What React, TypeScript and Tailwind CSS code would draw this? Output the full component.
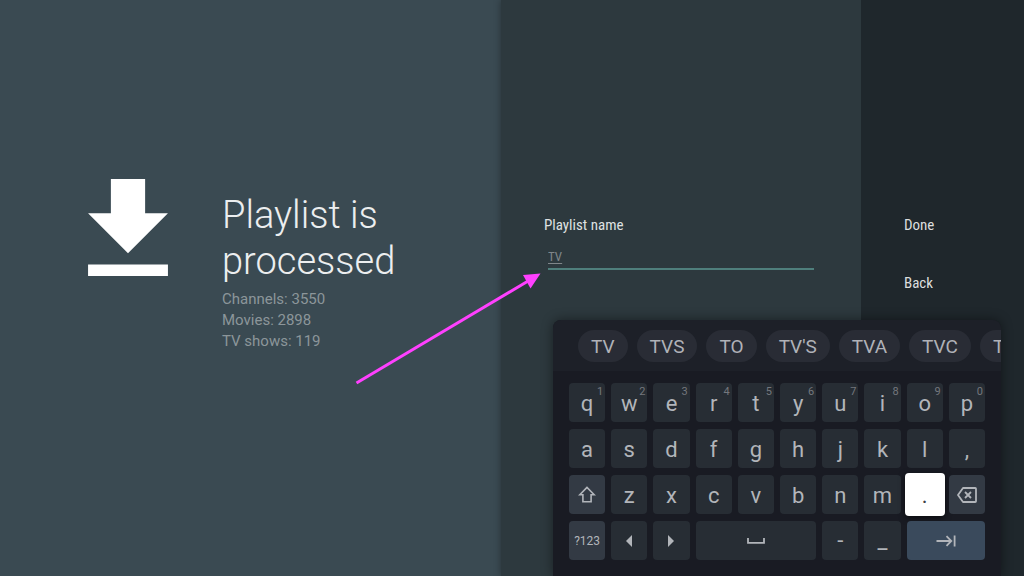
import type { ReactNode } from "react";

const suggestions = ["TV", "TVS", "TO", "TV'S", "TVA", "TVC", "T"];
const topRow = ["q", "w", "e", "r", "t", "y", "u", "i", "o", "p"];
const homeRow = ["a", "s", "d", "f", "g", "h", "j", "k", "l", ","];
const bottomRow = ["z", "x", "c", "v", "b", "n", "m"];
const stats = ["Channels: 3550", "Movies: 2898", "TV shows: 119"];

const plain = "bg-[#272d34]";
const special = "bg-[#333a44]";

function Key({ children, label, tone = plain, hint }: { children: ReactNode; label?: string; tone?: string; hint?: string }) {
  return (
    <button
      type="button"
      aria-label={label}
      className={`relative flex h-[39px] items-center justify-center rounded text-[22px] leading-none text-[#b2b5ba] ${tone}`}
    >
      {children}
      {hint && <span className="absolute top-[3px] right-[2px] text-[11px] leading-none text-[#74777d]">{hint}</span>}
    </button>
  );
}

function LetterKey({ letter, hint }: { letter: string; hint?: string }) {
  return (
    <Key hint={hint}>
      <span className="pt-[2px]">{letter}</span>
    </Key>
  );
}

function Keyboard() {
  return (
    <section
      aria-label="Keyboard"
      className="absolute right-[23px] bottom-0 w-[448px] overflow-hidden rounded-t-lg bg-[#191b23] shadow-[0_0_12px_rgba(0,0,0,0.45)]"
    >
      <div className="flex gap-[9px] overflow-hidden bg-[#1d2028] pt-[10px] pb-[9px] pl-[25px]">
        {suggestions.map((word) => (
          <button
            key={word}
            type="button"
            className="h-8 shrink-0 rounded-full bg-[#292c35] px-[13px] text-[19px] leading-none text-[#b0b2b8]"
          >
            {word}
          </button>
        ))}
      </div>
      <div className="grid grid-cols-10 gap-x-[6px] gap-y-[7px] px-4 pt-3 pb-4">
        {topRow.map((k, i) => (
          <LetterKey key={k} letter={k} hint={String((i + 1) % 10)} />
        ))}
        {homeRow.map((k) => (
          <LetterKey key={k} letter={k} />
        ))}
        <Key label="Shift" tone={special}>
          <svg className="h-[18px] w-[18px]" viewBox="0 0 18 18" fill="none" stroke="currentColor" strokeWidth="1.6">
            <path d="M9 1.4 1.8 8.8h3.1v7h8.2v-7h3.1z" />
          </svg>
        </Key>
        {bottomRow.map((k) => (
          <LetterKey key={k} letter={k} />
        ))}
        <button
          type="button"
          className="relative -m-[2px] flex items-center justify-center rounded bg-white pt-[2px] text-[22px] leading-none text-[#3c4045] shadow-[0_2px_6px_rgba(0,0,0,0.6)]"
        >
          .
        </button>
        <Key label="Backspace" tone={special}>
          <svg className="h-4 w-5" viewBox="0 0 20 16" fill="none" stroke="currentColor" strokeWidth="1.8">
            <path d="M6 1h12.2a.8.8 0 0 1 .8.8v12.4a.8.8 0 0 1-.8.8H6L1 8z" strokeLinejoin="round" />
            <path d="m8 5 6 6m0-6-6 6" />
          </svg>
        </Key>
        <Key tone={special}>
          <span className="text-[12px]">?123</span>
        </Key>
        <Key label="Left">
          <svg className="h-3 w-2" viewBox="0 0 8 12" fill="currentColor">
            <path d="M7 0v12L1 6z" />
          </svg>
        </Key>
        <Key label="Right">
          <svg className="h-3 w-2" viewBox="0 0 8 12" fill="currentColor">
            <path d="M1 0v12l6-6z" />
          </svg>
        </Key>
        <div className="col-span-3 grid">
          <Key label="Space">
            <svg className="h-[6px] w-[18px]" viewBox="0 0 18 6" fill="none" stroke="currentColor" strokeWidth="1.8">
              <path d="M1 0v4.8h16V0" />
            </svg>
          </Key>
        </div>
        <Key>-</Key>
        <Key>_</Key>
        <div className="col-span-2 grid">
          <Key label="Next" tone="bg-[#3a4a5c]">
            <svg className="h-3 w-5" viewBox="0 0 20 12" fill="none" stroke="currentColor" strokeWidth="1.8">
              <path d="M.5 6h14.5M10.5 1.2 15.3 6l-4.8 4.8M18.6.5v11" />
            </svg>
          </Key>
        </div>
      </div>
    </section>
  );
}

export default function App() {
  return (
    <main className="relative grid min-h-screen grid-cols-[501fr_360fr_163fr] overflow-hidden bg-[#3a4a52] font-['Roboto','Liberation_Sans',sans-serif]">
      <section className="flex items-start gap-[54px] pt-[179px] pl-[88px]">
        <svg className="h-[97px] w-20 shrink-0" viewBox="5 3 14 17" fill="#fff" aria-hidden="true">
          <path d="M19 9h-4V3H9v6H5l7 7 7-7zM5 18v2h14v-2H5z" />
        </svg>
        <div className="w-[200px] pt-[13px]">
          <h1 className="text-[38px] leading-[46px] font-light text-[#eceeef]">Playlist is processed</h1>
          <ul className="pt-[5px] text-[15px] leading-[21px] text-[#8c969a]">
            {stats.map((line) => (
              <li key={line}>{line}</li>
            ))}
          </ul>
        </div>
      </section>

      <form className="flex flex-col bg-[#2d393e] pt-[215px] pr-[47px] pl-[43px] font-['Roboto_Condensed','Roboto',sans-serif] shadow-[0_0_7px_rgba(0,0,0,0.35)]">
        <label htmlFor="playlist-name" className="text-[15px] leading-5 text-[#dfe1e2]">
          Playlist name
        </label>
        <input
          id="playlist-name"
          type="text"
          defaultValue="TV"
          className="mt-[11px] ml-1 h-6 border-b-2 border-[#4f7f7c] bg-transparent pb-[2px] text-[13px] leading-5 text-[#7f868a] underline underline-offset-2 outline-none"
        />
      </form>

      <nav className="flex flex-col items-start gap-[38px] bg-[#1f272c] pt-[215px] pl-[43px] font-['Roboto_Condensed','Roboto',sans-serif] text-[15px] leading-5 text-[#dcdedf]">
        <button type="button">Done</button>
        <button type="button">Back</button>
      </nav>

      <svg className="pointer-events-none absolute top-[270px] left-[350px] h-[120px] w-[200px]" viewBox="350 270 200 120" aria-hidden="true">
        <path d="M356.5 383 529 280.5" stroke="#ff40ff" strokeWidth="3" />
        <path d="m540.5 273.5-17.5 1.5 7.5 13.5z" fill="#ff40ff" />
      </svg>

      <Keyboard />
    </main>
  );
}
